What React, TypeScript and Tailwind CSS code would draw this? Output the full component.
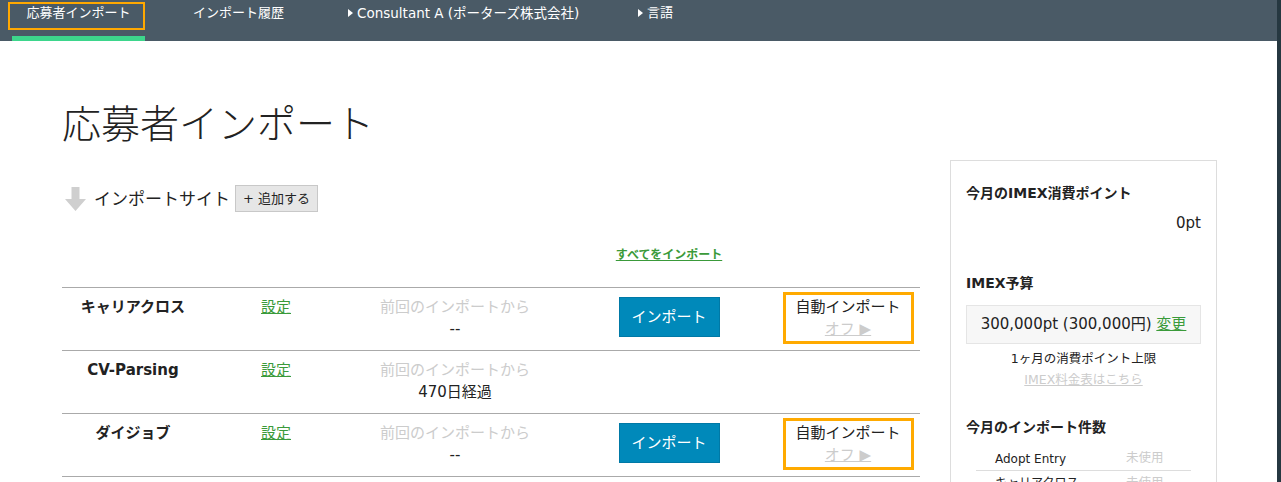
import React from 'react';

const font = { fontFamily: '"DejaVu Sans", "Noto Sans CJK JP", sans-serif' };

const Caret = () => (
  <svg width="5" height="8" viewBox="0 0 5 8" className="mr-[4px]">
    <path d="M0 0 L5 4 L0 8 Z" fill="#ffffff" />
  </svg>
);

const DownArrow = () => (
  <svg width="21" height="24" viewBox="0 0 21 24">
    <path d="M6.5 0 H14.5 V12 H21 L10.5 24 L0 12 H6.5 Z" fill="#cfcfcf" />
  </svg>
);

type Site = { name: string; last: string; importable: boolean };

const sites: Site[] = [
  { name: 'キャリアクロス', last: '--', importable: true },
  { name: 'CV-Parsing', last: '470日経過', importable: false },
  { name: 'ダイジョブ', last: '--', importable: true },
];

const cols = 'grid grid-cols-[142px_144px_214px_214px_144px]';

const App = () => {
  return (
    <div className="flex bg-white w-[1281px] h-[482px] overflow-hidden text-[#222]" style={font}>
      <div className="flex-1 flex flex-col">
        {/* Nav */}
        <nav className="h-[41px] bg-[#4a5a66] flex items-start text-white text-[13px]">
          <div className="relative ml-[12px] w-[133px] h-[41px] flex flex-col">
            <div className="h-[36px] flex items-start justify-center pt-[4px] leading-[18px]">応募者インポート</div>
            <div className="h-[5px] bg-[#3dd68c]" />
            <div className="absolute left-[-4px] top-[2px] w-[137px] h-[28px] border-[2px] border-[#ffa800]" />
          </div>
          <div className="ml-[48px] pt-[4px] leading-[18px]">インポート履歴</div>
          <div className="ml-[64px] w-[238px] pt-[4px] leading-[18px] flex items-center text-[13.5px]">
            <Caret />
            Consultant A (ポーターズ株式会社)
          </div>
          <div className="ml-[52px] pt-[4px] leading-[18px] flex items-center">
            <Caret />
            言語
          </div>
        </nav>

        <main className="pl-[62px]">
          <h1 className="mt-[60px] text-[39px] leading-[48px] font-light text-[#222]">応募者インポート</h1>

          <div className="flex mt-[11px] gap-[30px]">
            {/* Left column */}
            <div className="w-[858px] pt-[25px]">
              <div className="flex items-center h-[27px]">
                <span className="ml-[3px]">
                  <DownArrow />
                </span>
                <span className="ml-[8px] text-[17px] leading-[24px]">インポートサイト</span>
                <button className="ml-[5px] h-[27px] px-[7px] bg-[#e6e6e6] border border-[#c8c8c8] text-[13px] leading-[18px] text-[#222]">
                  + 追加する
                </button>
              </div>

              <div className={`${cols} mt-[35px]`}>
                <div />
                <div />
                <div />
                <div className="text-center text-[12px] leading-[16px] font-bold">
                  <a className="text-[#3a9a3a] underline">すべてをインポート</a>
                </div>
                <div />
              </div>

              <div className="mt-[24px] border-b border-[#aaaaaa]">
                {sites.map((s) => (
                  <div key={s.name} className={`${cols} h-[63px] border-t border-[#aaaaaa] items-start`}>
                    <div className="pt-[8px] text-center text-[15px] leading-[22px] font-bold">{s.name}</div>
                    <div className="pt-[8px] text-center text-[15px] leading-[22px]">
                      <a className="text-[#3a9a3a] underline">設定</a>
                    </div>
                    <div className="pt-[8px] text-center text-[15px] leading-[22px]">
                      <div className="text-[#cccccc]">前回のインポートから</div>
                      <div>{s.last}</div>
                    </div>
                    <div className="flex justify-center pt-[9px]">
                      {s.importable && (
                        <button className="w-[101px] h-[40px] bg-[#0089ba] border border-[#0079a6] text-white text-[15px]">
                          インポート
                        </button>
                      )}
                    </div>
                    <div className="flex justify-center pt-[4px]">
                      {s.importable && (
                        <div className="w-[131px] h-[52px] border-[3px] border-[#ffaa00] pt-[1px] text-center text-[15px] leading-[22px]">
                          <div>自動インポート</div>
                          <div className="text-[#cccccc] underline">オフ ▶</div>
                        </div>
                      )}
                    </div>
                  </div>
                ))}
              </div>
            </div>

            {/* Sidebar */}
            <aside className="w-[267px] h-[400px] border border-[#dddddd] px-[15px] pt-[22px]">
              <h3 className="text-[14px] leading-[20px] font-bold">今月のIMEX消費ポイント</h3>
              <div className="mt-[10px] text-right text-[15px] leading-[20px]">0pt</div>

              <h3 className="mt-[40px] text-[14px] leading-[20px] font-bold">IMEX予算</h3>
              <div className="mt-[12px] h-[39px] bg-[#f7f7f7] border border-[#e5e5e5] flex items-center justify-center text-[15px]">
                300,000pt (300,000円)&nbsp;<a className="text-[#3a9a3a] underline">変更</a>
              </div>
              <div className="mt-[4px] text-center text-[12.5px] leading-[21px]">1ヶ月の消費ポイント上限</div>
              <div className="text-center text-[12.5px] leading-[21px]">
                <a className="text-[#cccccc] underline">IMEX料金表はこちら</a>
              </div>

              <h3 className="mt-[27px] text-[14px] leading-[20px] font-bold">今月のインポート件数</h3>
              <div className="mt-[10px] mx-[10px]">
                <div className="flex h-[24px] items-center border-b border-[#dddddd] text-[12px]">
                  <span className="ml-[19px] w-[131px]">Adopt Entry</span>
                  <span className="text-[#cccccc] text-[12.5px]">未使用</span>
                </div>
                <div className="flex h-[24px] items-center text-[12px]">
                  <span className="ml-[19px] w-[131px]">キャリアクロス</span>
                  <span className="text-[#cccccc] text-[12.5px]">未使用</span>
                </div>
              </div>
            </aside>
          </div>
        </main>
      </div>
      <div className="w-[4px] h-[482px] bg-[#263841]" />
    </div>
  );
};

export default App;
